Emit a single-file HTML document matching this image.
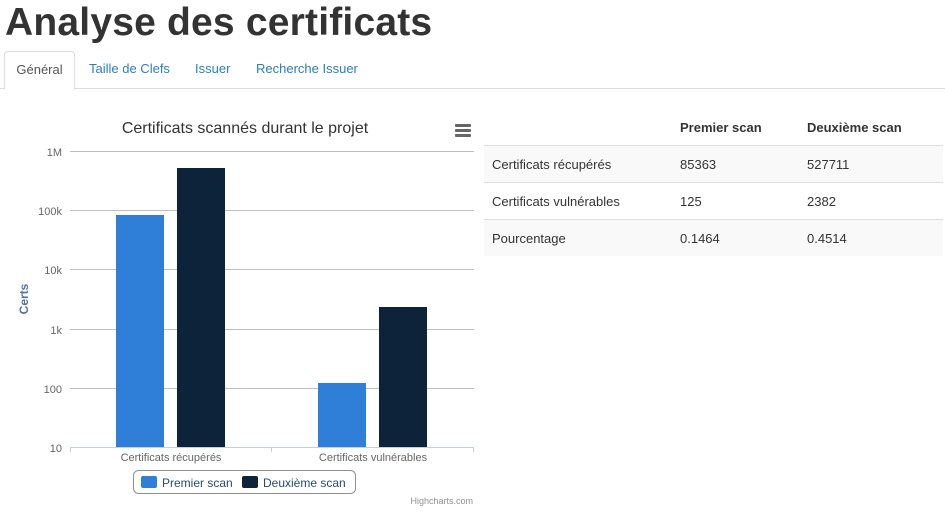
<!DOCTYPE html>
<html><head><meta charset="utf-8"><style>
body{margin:0;width:945px;height:518px;overflow:hidden;background:#fff;font-family:"Liberation Sans",sans-serif;color:#333;position:relative}
h1{position:absolute;left:5px;top:1px;margin:0;font-size:39px;font-weight:bold;color:#333;letter-spacing:0.2px}
.tabs{position:absolute;left:0;top:88px;width:945px;border-top:1px solid #ddd}
.tab{position:absolute;top:51px;height:37px;line-height:36px;font-size:13px;color:#2a7fc1}
.act{left:4px;width:69px;border:1px solid #ddd;border-bottom:1px solid #fff;border-radius:4px 4px 0 0;color:#555;text-align:center;height:37px;background:#fff;z-index:2}
table{position:absolute;left:484px;top:109px;width:459px;border-collapse:collapse;font-size:13px}
td,th{text-align:left;padding:0 8px;height:36px;border-top:1px solid #ddd}
th{border-top:none;border-bottom:1px solid #ddd;height:36px;font-weight:bold;padding-bottom:0}
tr.s td{background:#f9f9f9}
</style></head><body>
<h1>Analyse des certificats</h1>
<div class="tabs"></div>
<div class="tab act">Général</div>
<div class="tab" style="left:89px">Taille de Clefs</div>
<div class="tab" style="left:195px">Issuer</div>
<div class="tab" style="left:256px">Recherche Issuer</div>
<svg style="position:absolute;left:0;top:0" width="480" height="518" font-family="Liberation Sans, sans-serif">
<text x="245" y="133" text-anchor="middle" font-size="16" fill="#333">Certificats scannés durant le projet</text>
<g fill="#666"><rect x="455" y="124" width="16" height="3" rx="1"/><rect x="455" y="129" width="16" height="3" rx="1"/><rect x="455" y="134" width="16" height="3" rx="1"/></g>
<g stroke="#c0c0c0" stroke-width="1">
<line x1="70" y1="151.5" x2="474" y2="151.5"/><line x1="70" y1="210.5" x2="474" y2="210.5"/><line x1="70" y1="269.5" x2="474" y2="269.5"/><line x1="70" y1="329.5" x2="474" y2="329.5"/><line x1="70" y1="388.5" x2="474" y2="388.5"/>
</g>
<g stroke="#c0d0e0"><line x1="70" y1="447.5" x2="474" y2="447.5"/><line x1="70.5" y1="447" x2="70.5" y2="452"/><line x1="271.5" y1="447" x2="271.5" y2="452"/><line x1="473.5" y1="447" x2="473.5" y2="452"/></g>
<g font-size="11" fill="#666" text-anchor="end">
<text x="62" y="156">1M</text><text x="62" y="215">100k</text><text x="62" y="274">10k</text><text x="62" y="334">1k</text><text x="62" y="393">100</text><text x="62" y="452">10</text></g>
<text transform="translate(28,299) rotate(-90)" text-anchor="middle" font-size="12" font-weight="bold" fill="#4d759e">Certs</text>
<rect x="116" y="215" width="48" height="232" fill="#2f7ed8"/>
<rect x="177" y="168" width="48" height="279" fill="#0d233a"/>
<rect x="318" y="383" width="48" height="64" fill="#2f7ed8"/>
<rect x="379" y="307" width="48" height="140" fill="#0d233a"/>
<g font-size="11" fill="#666" text-anchor="middle"><text x="171" y="461">Certificats récupérés</text><text x="373" y="461">Certificats vulnérables</text></g>
<rect x="133.5" y="470.5" width="222" height="23" rx="5" fill="#fff" stroke="#909090"/>
<rect x="141" y="476" width="16" height="12" rx="2" fill="#2f7ed8"/>
<text x="162" y="487" font-size="12" fill="#274b6d">Premier scan</text>
<rect x="242" y="476" width="16" height="12" rx="2" fill="#0d233a"/>
<text x="263" y="487" font-size="12" fill="#274b6d">Deuxième scan</text>
<text x="473" y="504" text-anchor="end" font-size="9" fill="#909090">Highcharts.com</text>
</svg>
<table>
<tr><th style="width:172px"></th><th style="width:111px">Premier scan</th><th>Deuxième scan</th></tr>
<tr class="s"><td>Certificats récupérés</td><td>85363</td><td>527711</td></tr>
<tr><td>Certificats vulnérables</td><td>125</td><td>2382</td></tr>
<tr class="s"><td>Pourcentage</td><td>0.1464</td><td>0.4514</td></tr>
</table>
</body></html>
